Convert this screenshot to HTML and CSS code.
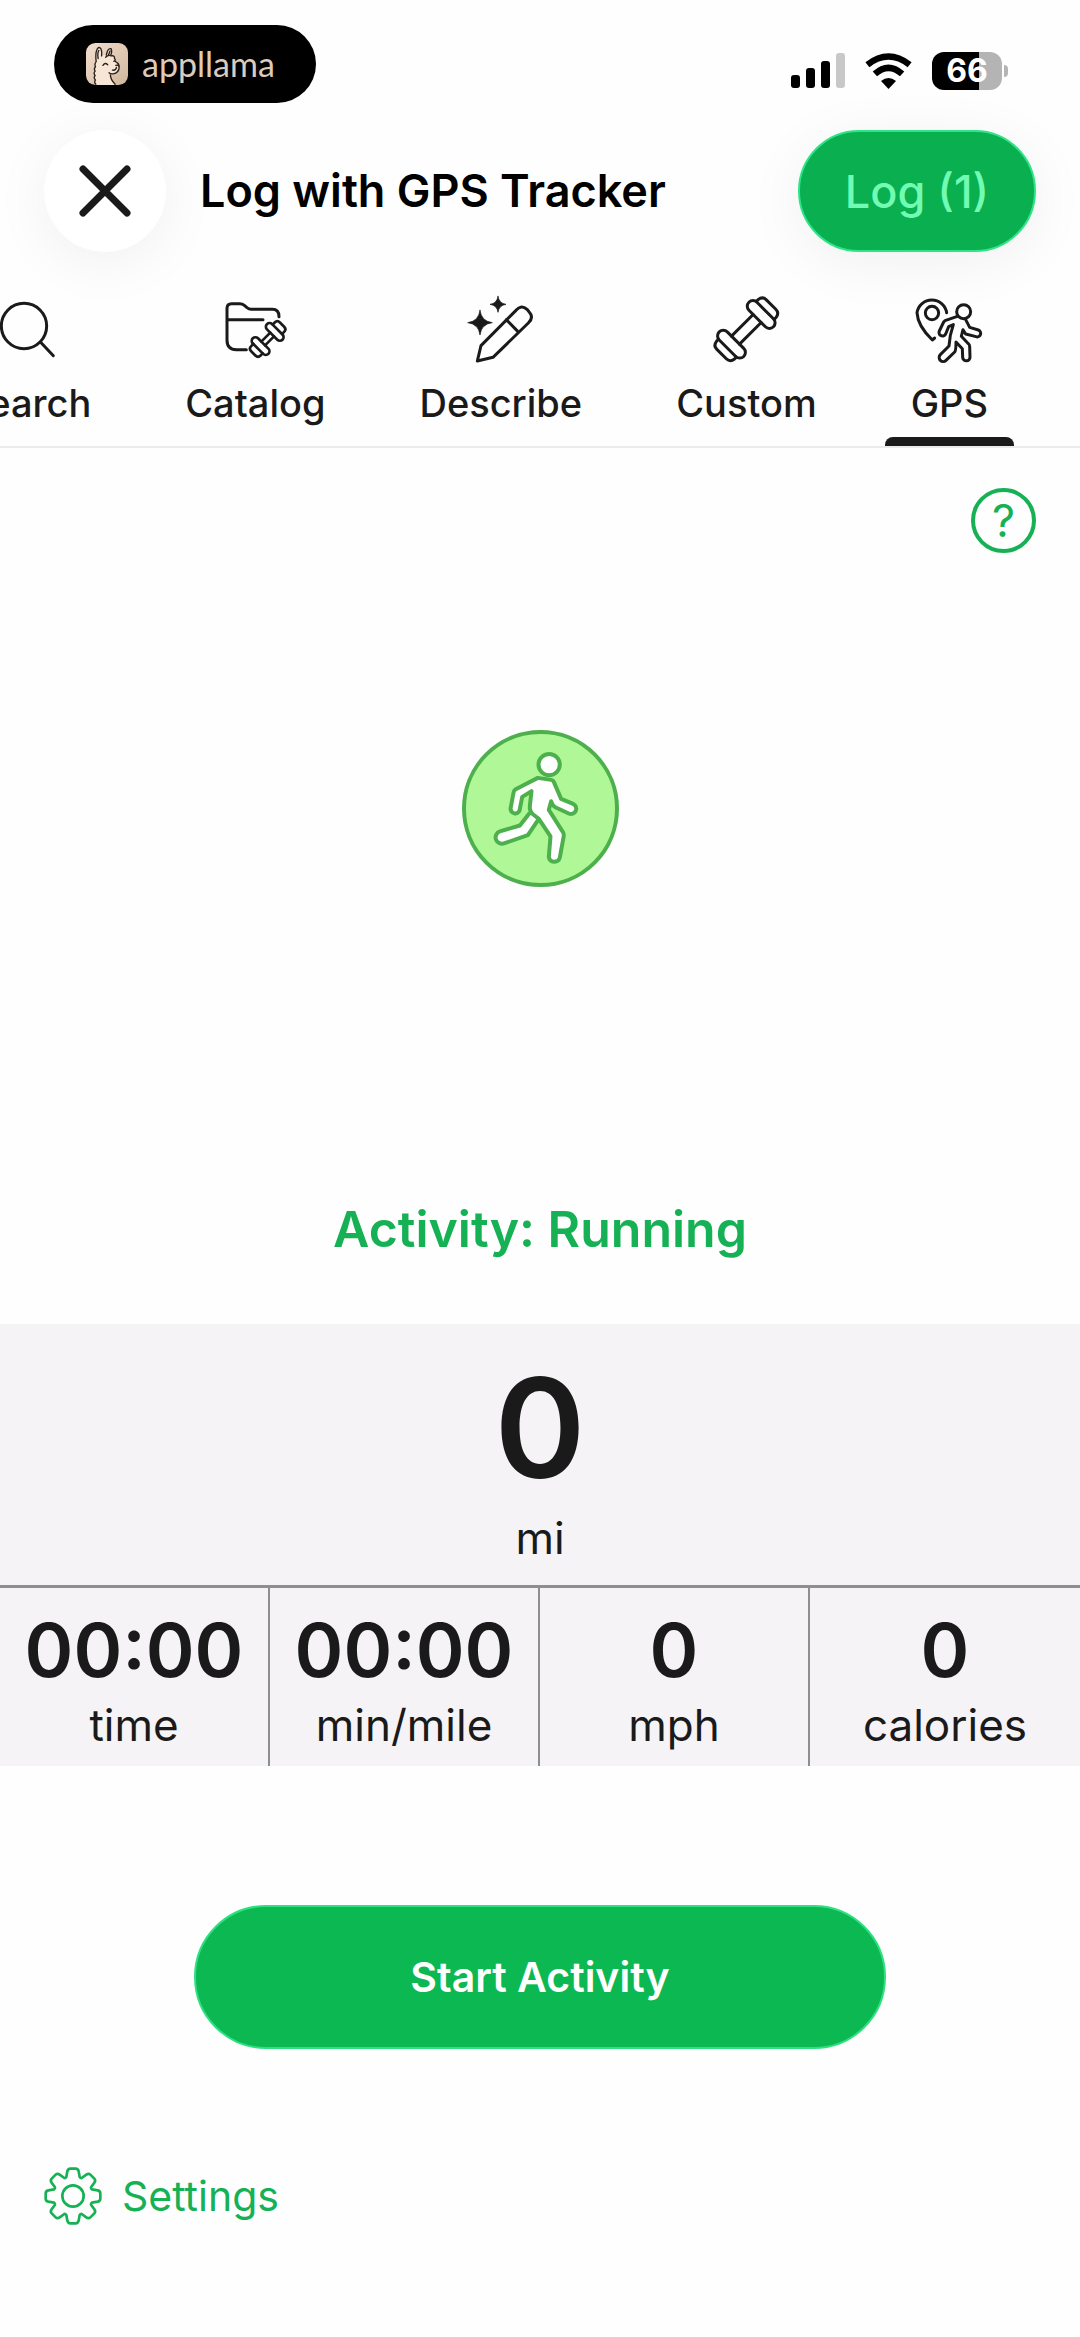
FILE: index.html
```
<!DOCTYPE html>
<html lang="en">
<head>
    <meta charset="UTF-8">
    <meta name="viewport" content="width=device-width, initial-scale=1.0">
    <title>Log with GPS Tracker</title>
    <link rel="stylesheet" href="styles.css">
</head>
<body>
    <div class="status-bar">
        <div class="brand">
            <svg class="brand-icon" viewBox="0 0 124 124" aria-hidden="true">
                <defs>
                    <linearGradient id="sand" x1="0" y1="0" x2="1" y2="1">
                        <stop offset="0" stop-color="#f3dfcf"/>
                        <stop offset="1" stop-color="#cfb59d"/>
                    </linearGradient>
                </defs>
                <rect width="124" height="124" rx="28" fill="url(#sand)"/>
                <path d="M29 124 Q23 116 28 109 Q21 103 27 96 Q21 89 27 83 Q22 76 28 70 Q24 62 30 55 Q26 20 38 13 Q48 14 46 38 Q52 34 59 36 Q64 14 74 17 Q78 24 74 37 Q84 38 86 50 Q98 58 98 70 Q98 88 80 91 L70 92 Q72 108 86 124 Z" fill="#f7e6d5"/>
                <g fill="none" stroke="#2b211b" stroke-width="4" stroke-linecap="round" stroke-linejoin="round">
                    <path d="M29 122 Q23 116 28 109 Q21 103 27 96 Q21 89 27 83 Q22 76 28 70 Q24 62 30 55 Q26 20 38 13 Q48 14 46 38"/>
                    <path d="M36 46 Q33 28 38 22"/>
                    <path d="M60 36 Q64 14 74 17 Q78 24 73 36 M66 36 L71 24"/>
                    <path d="M58 42 Q66 34 74 38 Q86 36 84 46 Q90 50 82 54"/>
                    <path d="M86 54 Q98 60 98 70 Q98 88 80 91 Q72 92 68 88 M88 66 Q96 64 97 70 M90 72 Q88 82 78 80"/>
                    <path d="M50 66 Q56 56 64 64 M72 94 Q72 108 86 122"/>
                </g>
            </svg>
            <span class="brand-name">appllama</span>
        </div>
        <div class="indicators">
            <svg class="signal" viewBox="0 0 54 36" aria-label="Signal">
                <rect x="0" y="22" width="9" height="13" rx="3"/>
                <rect x="15" y="15" width="9" height="20" rx="3"/>
                <rect x="30" y="8" width="9" height="27" rx="3"/>
                <rect x="45" y="0" width="9" height="35" rx="3" fill="#c8c8c8"/>
            </svg>
            <svg class="wifi" viewBox="0 0 138 105" aria-label="Wi-Fi">
                <path d="M69 105 L47 82 Q69 64 91 82 Z"/>
                <path d="M29 61 Q69 25 109 61" fill="none" stroke="#000" stroke-width="19"/>
                <path d="M7 34 Q69 -14 131 34" fill="none" stroke="#000" stroke-width="19"/>
            </svg>
            <div class="battery"><span class="battery-level">66</span></div>
        </div>
    </div>

    <header class="header">
        <button class="close" type="button" aria-label="Close">
            <svg viewBox="0 0 52 52"><path d="M4 4 L48 48 M48 4 L4 48"/></svg>
        </button>
        <h1 class="title">Log with GPS Tracker</h1>
        <button class="log" type="button">Log (1)</button>
    </header>

    <nav class="tabs">
        <a class="tab" href="#search">
            <svg class="icon" viewBox="0 0 216 216">
                <circle cx="99" cy="96" r="68"/>
                <path d="M149 145 L187 185"/>
            </svg>
            <span>Search</span>
        </a>
        <a class="tab" href="#catalog">
            <svg class="icon" viewBox="0 0 216 216">
                <path d="M180 68 Q180 46 160 46 H96 Q90 46 84 41 L76 34 Q70 29 62 29 H38 Q24 29 24 43 V138 Q24 167 52 167 H82 M26 77 H132"/>
                <g class="fine" transform="translate(146 135) rotate(-45)">
                    <path d="M-19 -8 H19 M-19 8 H19"/>
                    <rect x="19" y="-33" width="22" height="66" rx="11"/>
                    <rect x="-41" y="-33" width="22" height="66" rx="11"/>
                    <path d="M41 -20 H50 Q61 -20 61 -9 V9 Q61 20 50 20 H41"/>
                    <path d="M-41 -20 H-50 Q-61 -20 -61 -9 V9 Q-61 20 -50 20 H-41"/>
                </g>
            </svg>
            <span>Catalog</span>
        </a>
        <a class="tab" href="#describe">
            <svg class="icon" viewBox="0 0 216 216">
                <path class="solid" d="M45 49 Q49 82 82 86 Q49 90 45 123 Q41 90 8 86 Q41 82 45 49 Z"/>
                <path class="solid" d="M99 7 Q102 28 123 31 Q102 34 99 55 Q96 34 75 31 Q96 28 99 7 Z"/>
                <path d="M37 201 L48 155 L153 49 Q169 30 186 46 L192 53 Q208 70 190 87 L84 190 Z M124 77 L159 113"/>
            </svg>
            <span>Describe</span>
        </a>
        <a class="tab" href="#custom">
            <svg class="icon" viewBox="0 0 216 216">
                <g transform="translate(109 106) rotate(-45)">
                    <path d="M-46 -17 H46 M-46 17 H46"/>
                    <rect x="46" y="-52" width="34" height="104" rx="17"/>
                    <rect x="-80" y="-52" width="34" height="104" rx="17"/>
                    <path d="M80 -38 H88 Q105 -36 105 -20 V20 Q105 36 88 38 H80"/>
                    <path d="M-80 -38 H-88 Q-105 -36 -105 -20 V20 Q-105 36 -88 38 H-80"/>
                </g>
            </svg>
            <span>Custom</span>
        </a>
        <a class="tab active" href="#gps" aria-current="page">
            <svg class="icon" viewBox="0 0 216 216">
                <path d="M101 56 A45 45 0 0 0 12 56 Q14 96 58 138 L65 132"/>
                <circle cx="57" cy="57" r="20"/>
                <circle cx="152" cy="53" r="21"/>
                <path d="M133 67 L96 80 Q93 82 92 84 L79 111 A10 10 0 0 0 98 120 L107 98 L121 92 L112 124 L108 156 L82 182 A11 11 0 0 0 99 199 L125 174 Q129 170 129 144 L148 164 L149 190 A11 11 0 0 0 171 189 L170 158 Q170 152 166 149 L145 127 L150 107 L158 120 L189 128 A10 10 0 0 0 196 108 L170 100 L158 77"/>
            </svg>
            <span>GPS</span>
        </a>
    </nav>

    <main class="tracker">
        <button class="help" type="button" aria-label="Help">?</button>

        <svg class="runner" viewBox="0 0 472 472" aria-hidden="true">
            <circle cx="236" cy="236" r="230" fill="#aff797"/>
            <g fill="#fff">
                <path d="M204 249 L174 287 L114 305 A18 18 0 0 0 126 341 L198 316 L231 267"/>
                <path d="M228 144 L160 179 Q156 182 155 188 L146 236 A14 14 0 0 0 173 242 L181 201 L209 184 L204 228 Q202 244 214 254 L231 267 L266 320 L261 382 A17 17 0 0 0 294 384 L306 318 Q307 312 303 306 L261 240 L268 214 Q272 228 282 233 L321 251 A15 15 0 0 0 334 222 L298 207 L276 156 Q274 151 268 150 Z"/>
                <circle cx="262" cy="104" r="32"/>
            </g>
        </svg>

        <h2 class="activity"><a href="#activity">Activity: Running</a></h2>

        <dl class="stats">
            <div class="stat distance">
                <dd>0</dd>
                <dt>mi</dt>
            </div>
            <div class="stat">
                <dd>00:00</dd>
                <dt>time</dt>
            </div>
            <div class="stat">
                <dd>00:00</dd>
                <dt>min/mile</dt>
            </div>
            <div class="stat">
                <dd>0</dd>
                <dt>mph</dt>
            </div>
            <div class="stat">
                <dd>0</dd>
                <dt>calories</dt>
            </div>
        </dl>

        <button class="start" type="button">Start Activity</button>

        <a class="settings" href="#settings">
            <svg viewBox="-87 -87 174 174" aria-hidden="true">
                <path d="M-20 -57 L-17 -74 Q-15 -82 -8 -82 H8 Q15 -82 17 -74 L20 -57 Q23 -53 26 -54 L40 -64 Q47 -69 52 -64 L64 -52 Q69 -47 64 -40 L54 -26 Q53 -23 57 -20 L74 -17 Q82 -15 82 -8 V8 Q82 15 74 17 L57 20 Q53 23 54 26 L64 40 Q69 47 64 52 L52 64 Q47 69 40 64 L26 54 Q23 53 20 57 L17 74 Q15 82 8 82 H-8 Q-15 82 -17 74 L-20 57 Q-23 53 -26 54 L-40 64 Q-47 69 -52 64 L-64 52 Q-69 47 -64 40 L-54 26 Q-53 23 -57 20 L-74 17 Q-82 15 -82 8 V-8 Q-82 -15 -74 -17 L-57 -20 Q-53 -23 -54 -26 L-64 -40 Q-69 -47 -64 -52 L-52 -64 Q-47 -69 -40 -64 L-26 -54 Q-23 -53 -20 -57 Z"/>
                <circle r="32"/>
            </svg>
            <span>Settings</span>
        </a>
    </main>
</body>
</html>
```
FILE: styles.css
```
* {
    margin: 0;
    padding: 0;
    box-sizing: border-box;
}

body {
    min-height: 100vh;
    background: #fefefe;
    color: #1a1a1a;
    font-family: 'Inter', 'Liberation Sans', sans-serif;
    overflow-x: hidden;
}

button {
    border: none;
    font-family: inherit;
    cursor: pointer;
}

a {
    color: inherit;
    text-decoration: none;
}

/* Status bar */
.status-bar {
    display: flex;
    justify-content: space-between;
    align-items: center;
    padding: 25px 72px 27px 54px;
}

.brand {
    display: flex;
    align-items: center;
    gap: 14px;
    width: 262px;
    height: 78px;
    padding-left: 32px;
    background: #000;
    border-radius: 39px;
}

.brand-icon {
    width: 42px;
    height: 42px;
}

.brand-name {
    color: #dccabb;
    font-family: 'Lato', sans-serif;
    font-size: 34px;
    line-height: 40px;
}

.indicators {
    display: flex;
    align-items: center;
    gap: 20px;
    padding-top: 14px;
}

.signal {
    width: 54px;
    height: 36px;
}

.wifi {
    width: 47px;
    height: 36px;
}

.battery {
    position: relative;
    width: 70px;
    height: 38px;
    margin-right: 6px;
    border-radius: 12px;
    background: linear-gradient(to right, #000 67%, #b4b4b4 67%);
    text-align: center;
}

.battery::after {
    content: '';
    position: absolute;
    top: 13px;
    right: -6px;
    width: 4px;
    height: 12px;
    background: #b4b4b4;
    border-radius: 0 4px 4px 0;
}

.battery-level {
    color: #fff;
    font-size: 32px;
    font-weight: 700;
    line-height: 38px;
}

/* Header */
.header {
    display: flex;
    align-items: center;
    padding: 0 44px;
}

.close {
    display: flex;
    align-items: center;
    justify-content: center;
    width: 122px;
    height: 122px;
    background: #fff;
    border-radius: 50%;
    box-shadow: 0 10px 60px rgba(0, 0, 0, 0.06);
}

.close svg {
    width: 52px;
    height: 52px;
    fill: none;
    stroke: #1a1a1a;
    stroke-width: 7;
    stroke-linecap: round;
}

.title {
    flex: 1;
    padding-left: 34px;
    color: #000;
    font-size: 45px;
    font-weight: 600;
    line-height: 56px;
}

.log {
    width: 238px;
    height: 122px;
    background: #0aaf50;
    border: 2px solid #2fe488;
    border-radius: 61px;
    box-shadow: 0 10px 60px rgba(0, 0, 0, 0.06);
    color: #72fbb2;
    font-size: 45px;
    font-weight: 500;
}

/* Tabs */
.tabs {
    display: flex;
    justify-content: flex-end;
    gap: 42px;
    padding-top: 42px;
    padding-right: 66px;
    border-bottom: 2px solid #ebebeb;
    overflow: hidden;
}

.tab {
    position: relative;
    display: flex;
    flex-direction: column;
    align-items: center;
    gap: 14px;
    padding: 0 26px 20px;
    font-size: 38px;
    font-weight: 500;
    line-height: 46px;
}

.tab.active::after {
    content: '';
    position: absolute;
    bottom: 0;
    left: 0;
    width: 100%;
    height: 9px;
    background: #1a1a1a;
    border-radius: 8px 8px 0 0;
}

.icon {
    width: 72px;
    height: 72px;
    fill: none;
    stroke: #1a1a1a;
    stroke-width: 9;
    stroke-linecap: round;
    stroke-linejoin: round;
}

.icon .fine {
    stroke-width: 8;
}

.icon .solid {
    fill: #1a1a1a;
    stroke-width: 2;
}

/* Tracker */
.tracker {
    display: flex;
    flex-direction: column;
    align-items: center;
    padding-top: 40px;
}

.help {
    align-self: flex-end;
    width: 65px;
    height: 65px;
    margin-right: 44px;
    background: none;
    border: 4px solid #16b055;
    border-radius: 50%;
    color: #16b055;
    font-size: 45px;
    font-weight: 400;
    line-height: 56px;
}

.runner {
    width: 157px;
    height: 157px;
    margin: 177px 0 312px;
    stroke: #4db04d;
    stroke-width: 12;
    stroke-linejoin: round;
}

.activity {
    color: #16b055;
    font-size: 50px;
    font-weight: 600;
    line-height: 60px;
}

.stats {
    display: grid;
    grid-template-columns: repeat(4, 1fr);
    width: 100%;
    margin-top: 65px;
    background: #f5f3f6;
}

.stat {
    display: flex;
    flex-direction: column;
    align-items: center;
    gap: 7px;
    padding: 22px 0 13px;
    border-right: 2px solid #8e8e90;
}

.stat:last-child {
    border-right: none;
}

.stat dd {
    font-size: 74px;
    font-weight: 600;
    line-height: 80px;
}

.stat dt {
    font-size: 44px;
    line-height: 56px;
}

.distance {
    grid-column: 1 / -1;
    gap: 12px;
    padding: 34px 0 19px;
    border-right: none;
    border-bottom: 3px solid #8e8e90;
}

.distance dd {
    font-size: 138px;
    line-height: 140px;
}

.start {
    width: 64%;
    height: 144px;
    margin-top: 139px;
    background: #0cb852;
    border: 2px solid #2ee080;
    border-radius: 72px;
    color: #fff;
    font-size: 41px;
    font-weight: 600;
}

.settings {
    display: flex;
    align-items: center;
    align-self: flex-start;
    gap: 20px;
    margin: 118px 0 0 44px;
    color: #16b055;
    font-size: 41px;
    line-height: 58px;
}

.settings svg {
    width: 58px;
    height: 58px;
    fill: none;
    stroke: #16b055;
    stroke-width: 8;
    stroke-linejoin: round;
}
```
